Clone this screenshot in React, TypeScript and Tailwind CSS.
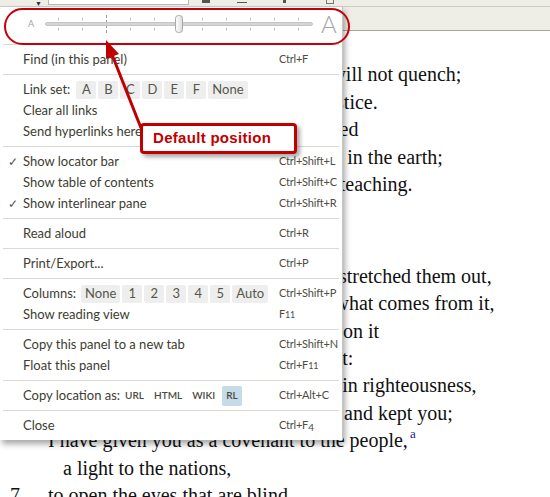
import React from 'react';

type Line = { v?: string; indent: number; text: React.ReactNode; gapTop?: boolean };

// Poetry lines of the passage behind the panel menu
const lines: Line[] = [
  { indent: 48, text: 'a bruised reed he will not break,' },
  { indent: 97, text: 'and a dimly burning wick he will not quench;' },
  { indent: 90, text: 'he will faithfully bring forth justice.' },
  { v: '4', indent: 68, text: 'He will not grow faint or be crushed' },
  { indent: 99, text: 'until he has established justice in the earth;' },
  { indent: 92, text: 'and the coastlands wait for his teaching.' },
  { v: '5', indent: 48, text: 'Thus says God, the LORD,', gapTop: true },
  { indent: 104, text: 'who created the heavens and stretched them out,' },
  { indent: 99, text: 'who spread out the earth and what comes from it,' },
  { indent: 73, text: 'who gives breath to the people upon it' },
  { indent: 85, text: 'and spirit to those who walk in it:' },
  { v: '6', indent: 65, text: 'I am the LORD, I have called you in righteousness,' },
  { indent: 108, text: 'I have taken you by the hand and kept you;' },
  {
    indent: 48,
    text: (
      <>
        I have given you as a covenant to the people,
        <sup className="relative -top-[9px] ml-[2px] text-[13px] text-[#1a1aa0]">a</sup>
      </>
    ),
  },
  { indent: 63, text: 'a light to the nations,' },
  { v: '7', indent: 48, text: 'to open the eyes that are blind,' },
];

const Sep = () => <div className="mx-[3px] h-px bg-[#dcdad0]" />;

const Pill = ({ children }: { children: React.ReactNode }) => (
  <span className="flex h-[18px] min-w-[20px] items-center justify-center rounded-[2px] bg-[#eeeeee] px-[4px] text-[13px] text-[#56564b]">
    {children}
  </span>
);

const Tag = ({ children, active }: { children: React.ReactNode; active?: boolean }) => (
  <span
    className={
      active
        ? 'flex h-[20px] items-center rounded-[2px] bg-[#c6dbe7] px-[4px] text-[10px] font-semibold text-[#4b4b40]'
        : 'flex h-[20px] items-center px-[3px] text-[10px] font-semibold text-[#4b4b40]'
    }
  >
    {children}
  </span>
);

interface ItemProps {
  label: string;
  keys?: React.ReactNode;
  checked?: boolean;
  children?: React.ReactNode;
}

const Item: React.FC<ItemProps> = ({ label, keys, checked, children }) => (
  <div className="flex h-[21px] items-center whitespace-nowrap">
    <span className="w-[23px] pl-[8px] text-[12px] text-[#55554a]">{checked ? '✓' : ''}</span>
    <span className="flex flex-1 items-center text-[13px] text-[#3d3d31]">
      {label}
      {children}
    </span>
    <span className="w-[63px] text-[11px] tracking-[-0.2px] text-[#4d4d42]">{keys}</span>
  </div>
);

const Slider = () => {
  const ticks = [13, 37, 85, 109, 157, 181, 205, 229, 253];
  return (
    <svg width="268" height="30" viewBox="0 0 268 30">
      <defs>
        <linearGradient id="thumb" x1="0" y1="0" x2="1" y2="0">
          <stop offset="0" stopColor="#ffffff" />
          <stop offset="1" stopColor="#dcdcdc" />
        </linearGradient>
      </defs>
      {ticks.map((x) => (
        <g key={x} stroke="#bdbdbd" strokeWidth="1">
          <line x1={x + 0.5} y1="9" x2={x + 0.5} y2="11.5" />
          <line x1={x + 0.5} y1="19" x2={x + 0.5} y2="21.5" />
        </g>
      ))}
      <line x1="61.5" y1="6" x2="61.5" y2="26" stroke="#9a9a9a" strokeWidth="1" strokeDasharray="3 2" />
      <rect x="0.5" y="13.5" width="267" height="3" rx="1.5" fill="#d6d6d6" stroke="#c4c4c4" />
      <rect x="130.5" y="6.5" width="7" height="17" rx="3" fill="url(#thumb)" stroke="#a9a9a9" />
    </svg>
  );
};

const PanelMenu = () => (
  <div className="absolute left-0 top-[7px] w-[343px] border-r border-[#c4c4c0] bg-white shadow-[2px_4px_6px_rgba(0,0,0,0.35)] font-['Lato','Liberation_Sans',sans-serif]">
    <div className="flex h-[37px] items-center pb-[3px] pl-[28px]">
      <span className="w-[17px] text-[9px] text-[#a4a4a4]">A</span>
      <Slider />
      <span className="ml-[8px] text-[24px] font-light leading-none text-[#a8a8a8]">A</span>
    </div>
    <Sep />
    <div className="py-1">
      <Item label="Find (in this panel)" keys="Ctrl+F" />
    </div>
    <Sep />
    <div className="py-1">
      <Item label="Link set:">
        <span className="ml-[6px] flex gap-[2px]">
          {['A', 'B', 'C', 'D', 'E', 'F', 'None'].map((l) => (
            <Pill key={l}>{l}</Pill>
          ))}
        </span>
      </Item>
      <Item label="Clear all links" />
      <Item label="Send hyperlinks here" />
    </div>
    <Sep />
    <div className="py-1">
      <Item label="Show locator bar" keys="Ctrl+Shift+L" checked />
      <Item label="Show table of contents" keys="Ctrl+Shift+C" />
      <Item label="Show interlinear pane" keys="Ctrl+Shift+R" checked />
    </div>
    <Sep />
    <div className="py-1">
      <Item label="Read aloud" keys="Ctrl+R" />
    </div>
    <Sep />
    <div className="py-1">
      <Item label="Print/Export..." keys="Ctrl+P" />
    </div>
    <Sep />
    <div className="py-1">
      <Item label="Columns:" keys="Ctrl+Shift+P">
        <span className="ml-[5px] flex gap-[2px]">
          {['None', '1', '2', '3', '4', '5', 'Auto'].map((l) => (
            <Pill key={l}>{l}</Pill>
          ))}
        </span>
      </Item>
      <Item
        label="Show reading view"
        keys={
          <>
            F<span className="text-[9px]">11</span>
          </>
        }
      />
    </div>
    <Sep />
    <div className="py-1">
      <Item label="Copy this panel to a new tab" keys="Ctrl+Shift+N" />
      <Item
        label="Float this panel"
        keys={
          <>
            Ctrl+F<span className="text-[9px]">11</span>
          </>
        }
      />
    </div>
    <Sep />
    <div className="py-1">
      <Item label="Copy location as:" keys="Ctrl+Alt+C">
        <span className="ml-[2px] flex gap-[4px]">
          <Tag>URL</Tag>
          <Tag>HTML</Tag>
          <Tag>WIKI</Tag>
          <Tag active>RL</Tag>
        </span>
      </Item>
    </div>
    <Sep />
    <div className="py-1">
      <Item
        label="Close"
        keys={
          <>
            Ctrl+F<span className="relative top-[2px] text-[10px]">4</span>
          </>
        }
      />
    </div>
  </div>
);

export default function App() {
  return (
    <div className="relative h-[497px] w-[550px] overflow-hidden bg-white">
      {/* toolbar (bottom edge only) */}
      <div className="relative h-[7px] border-b border-[#cfcdc3] bg-[#efeee6]">
        <span className="absolute left-[35px] top-0 text-[7px] leading-none text-[#333]">▼</span>
        <div className="absolute left-[48px] top-[-2px] h-[7px] w-[141px] border border-[#b9b8ae] bg-white" />
        <div className="absolute left-[202px] top-0 h-[3px] w-[8px] bg-[#555]" />
        <div className="absolute left-[237px] top-[2px] h-[1px] w-[10px] bg-[#555]" />
        <div className="absolute left-[283px] top-0 h-[3px] w-[3px] bg-[#555]" />
        <div className="absolute left-[326px] top-[-2px] h-[6px] w-[8px] border border-[#777]" />
      </div>
      {/* locator bar */}
      <div className="h-[24px] border-b border-[#a7a69d] bg-[#efeee6]" />
      {/* document text */}
      <div className="pt-[3px] font-['Liberation_Serif',serif] text-[20px] leading-[27.4px] text-[#111]">
        {lines.map((ln, i) => (
          <div key={i} className={ln.gapTop ? 'mt-[37px] flex whitespace-nowrap' : 'flex whitespace-nowrap'}>
            <span className="w-[48px] shrink-0 pl-[10px]">{ln.v}</span>
            <span style={{ paddingLeft: ln.indent - 48 }}>{ln.text}</span>
          </div>
        ))}
      </div>

      <PanelMenu />

      {/* annotations */}
      <div className="absolute left-[4px] top-[8px] h-[37px] w-[346px] rounded-full border-2 border-[#c4000c]" />
      <svg className="pointer-events-none absolute left-0 top-0" width="550" height="497">
        <line x1="141" y1="128" x2="111" y2="52" stroke="#c00000" strokeWidth="3" />
        <polygon points="106,40 119,54 106,59" fill="#c00000" />
      </svg>
      <div className="absolute left-[140px] top-[123px] flex h-[31px] w-[157px] items-center rounded-[4px] border-[3px] border-[#c00000] bg-white pl-[10px] shadow-[3px_3px_4px_rgba(0,0,0,0.35)]">
        <span className="font-['Liberation_Sans',sans-serif] text-[15px] font-bold tracking-[0.3px] text-[#c00000]">
          Default position
        </span>
      </div>
    </div>
  );
}
